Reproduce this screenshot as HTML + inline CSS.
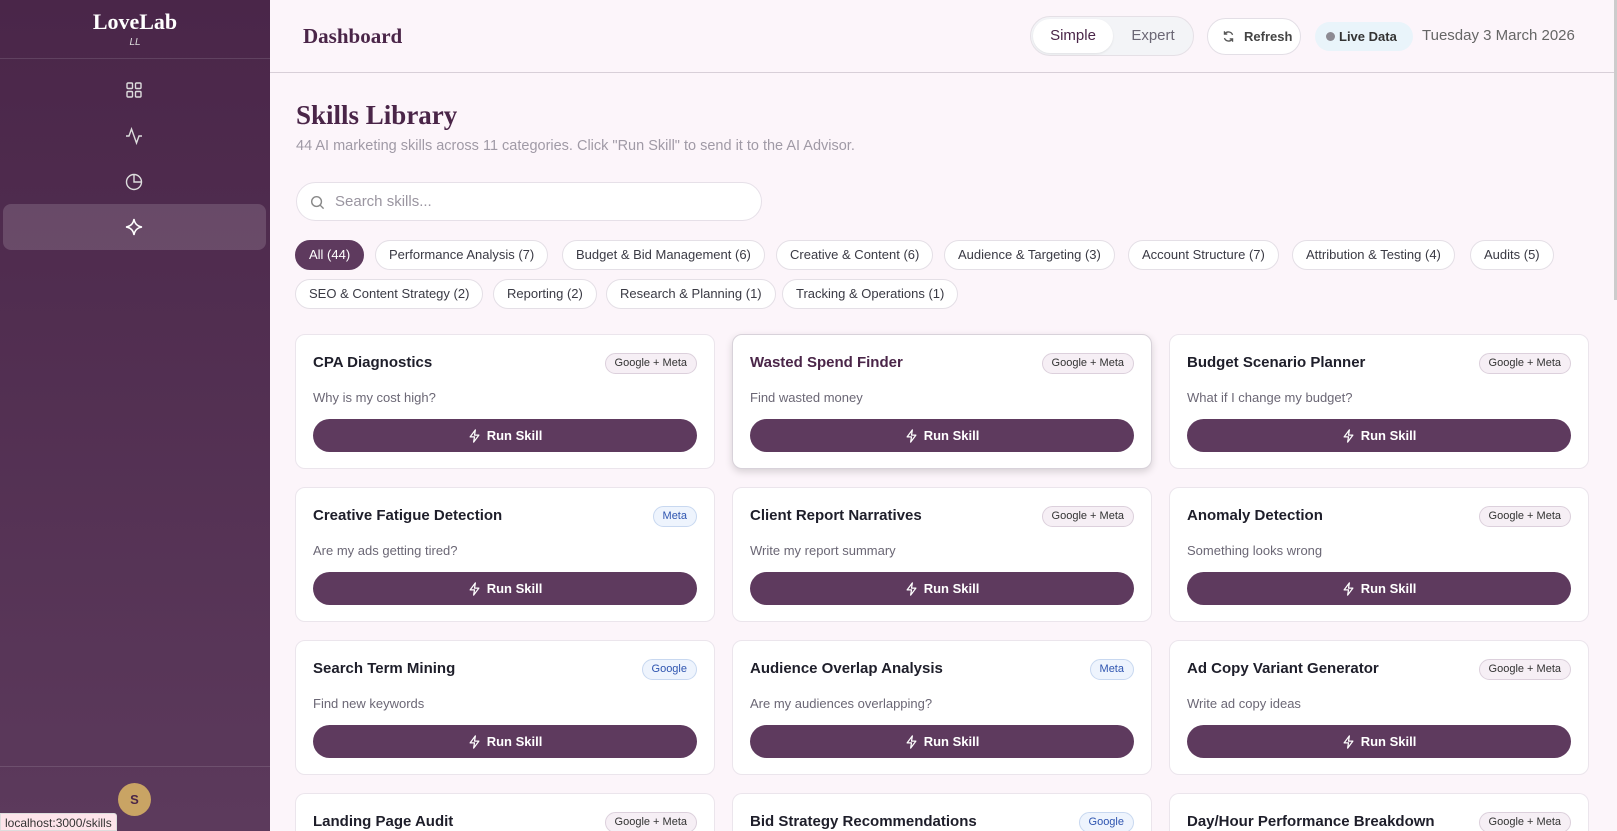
<!DOCTYPE html>
<html style="width:1617px;height:831px;overflow:hidden"><head><meta charset="utf-8"><style>
*{box-sizing:border-box;margin:0;padding:0}
body{width:1617px;height:831px;overflow:hidden;background:#fcf5fa;font-family:"Liberation Sans",sans-serif;position:relative}
.side{position:absolute;left:0;top:0;width:270px;height:831px;background:linear-gradient(#4a2649,#5c3a5c)}
.logo{position:absolute;top:9px;width:270px;text-align:center;color:#fff;font:bold 22px "Liberation Serif",serif}
.ll{position:absolute;top:37px;width:270px;text-align:center;color:#ddd;font:italic 10px "Liberation Sans",sans-serif}
.sline{position:absolute;left:0;width:270px;height:1px;background:rgba(255,255,255,.12)}
.ic{position:absolute;left:124px;width:20px;height:20px}
.act{position:absolute;left:3px;top:204px;width:263px;height:46px;border-radius:8px;background:rgba(255,255,255,.15)}
.av{position:absolute;left:118px;top:783px;width:33px;height:33px;border-radius:50%;background:#c9a464;color:#4a2648;font:bold 13px sans-serif;text-align:center;line-height:33px}
.url{position:absolute;left:0;top:813px;padding:2px 4px;background:#fde4ea;border:1px solid #ddd;border-radius:0 3px 0 0;font-size:12px;color:#333;height:18px}
.hdr{position:absolute;left:270px;top:0;right:0;height:73px;border-bottom:1px solid #d8cfd8}
.dash{position:absolute;left:303px;top:24px;font:bold 21px "Liberation Serif",serif;color:#4a2548}
.tog{position:absolute;left:1030px;top:16px;width:164px;height:40px;border-radius:20px;border:1px solid #e5e0e6;background:#f3f4f7}
.tog .s{position:absolute;left:2px;top:2px;width:80px;height:34px;border-radius:17px;background:#fff;box-shadow:0 1px 2px rgba(0,0,0,.08);text-align:center;line-height:34px;font-size:15px;color:#4a2548}
.tog .e{position:absolute;left:84px;top:2px;width:76px;text-align:center;line-height:34px;font-size:15px;color:#6b6775}
.ref{position:absolute;left:1207px;top:18px;width:94px;height:37px;border-radius:19px;border:1px solid #e3dfe6;background:#fff;font-size:13px;font-weight:bold;color:#444;line-height:35px;padding-left:36px}
.live{position:absolute;left:1315px;top:22px;width:98px;height:29px;border-radius:15px;background:#e9f4fa;font-size:13px;font-weight:bold;color:#333;line-height:29px;padding-left:24px}
.live:before{content:"";position:absolute;left:11px;top:10px;width:9px;height:9px;border-radius:50%;background:#8d8a92}
.date{position:absolute;left:1422px;top:27px;font-size:15px;color:#666;}
.scroll{position:absolute;left:1614px;top:0;width:3px;height:300px;background:#ccc}
h1{position:absolute;left:296px;top:100px;font:bold 27px "Liberation Serif",serif;color:#4a2548}
.sub{position:absolute;left:296px;top:138px;font-size:14.5px;color:#a09aa6}
.search{position:absolute;left:296px;top:182px;width:466px;height:39px;border-radius:20px;border:1px solid #e6e0e8;background:#fff;font-size:15px;color:#9a95a0;line-height:37px;padding-left:38px}
.chip{position:absolute;height:30px;border-radius:15px;border:1px solid #e4dfe6;background:#fff;font-size:13px;color:#3a3a44;line-height:28px;padding:0 13px;white-space:nowrap}
.chip.on{background:#5e3a5e;color:#fff;border-color:#5e3a5e}
.card{position:absolute;width:420px;height:135px;border-radius:10px;border:1px solid #ebe5ec;background:#fff}
.card.hv{box-shadow:0 3px 8px rgba(0,0,0,.15);border-color:#d8d2da}
.card .t{position:absolute;left:17px;top:19px;font-size:15px;font-weight:bold;color:#1e1e2a}
.card.hv .t{color:#4a2548}
.card .b{position:absolute;right:17px;top:18px;height:21px;border-radius:11px;border:1px solid #dcd0dc;background:#f6eff5;font-size:11px;color:#333;line-height:19px;padding:0 9px}
.card .b.bl{background:#eef4fd;border-color:#c8d8f0;color:#2f55b0}
.card .d{position:absolute;left:17px;top:55px;font-size:13px;color:#6b6775}
.card .r{position:absolute;left:17px;right:17px;top:84px;height:33px;border-radius:17px;background:#5e3a5e;color:#fff;font-size:13px;font-weight:bold;text-align:center;line-height:33px}
.r svg{vertical-align:-3px;margin-right:6px}
</style></head><body>
<div class="side">
<div class="logo">LoveLab</div><div class="ll">LL</div>
<div class="sline" style="top:58px"></div>
<svg class="ic" style="top:80px" viewBox="0 0 20 20" fill="none" stroke="#ddd" stroke-width="1.4"><rect x="3" y="3" width="5.5" height="5.5" rx="1"/><rect x="11.5" y="3" width="5.5" height="5.5" rx="1"/><rect x="3" y="11.5" width="5.5" height="5.5" rx="1"/><rect x="11.5" y="11.5" width="5.5" height="5.5" rx="1"/></svg>
<svg class="ic" style="top:126px" viewBox="0 0 20 20" fill="none" stroke="#ddd" stroke-width="1.4"><path d="M2 10h3l2.5-7 5 14 2.5-7h3"/></svg>
<svg class="ic" style="top:172px" viewBox="0 0 20 20" fill="none" stroke="#ddd" stroke-width="1.4"><circle cx="10" cy="10" r="7.5"/><path d="M10 2.5V10h7.5"/></svg>
<div class="act"></div>
<svg class="ic" style="top:217px" viewBox="0 0 20 20" fill="none" stroke="#fff" stroke-width="1.5"><path d="M10 2Q11 9 18 10Q11 11 10 18Q9 11 2 10Q9 9 10 2Z"/></svg>
<div class="sline" style="top:766px"></div>
<div class="av">S</div>
</div>
<div class="hdr"></div>
<div class="dash">Dashboard</div>
<div class="tog"><div class="s">Simple</div><div class="e">Expert</div></div>
<div class="ref"><svg style="position:absolute;left:14px;top:11px" width="13" height="13" viewBox="0 0 16 16" fill="none" stroke="#555" stroke-width="1.6"><path d="M13 6A5.5 5.5 0 0 0 3.5 4.5M3 10a5.5 5.5 0 0 0 9.5 1.5M3 1.5v3.5h3.5M13 14.5V11H9.5"/></svg>Refresh</div>
<div class="live">Live Data</div>
<div class="date">Tuesday 3 March 2026</div>
<div class="scroll"></div>
<h1>Skills Library</h1>
<div class="sub">44 AI marketing skills across 11 categories. Click "Run Skill" to send it to the AI Advisor.</div>
<div class="search"><svg style="position:absolute;left:13px;top:12px" width="15" height="15" viewBox="0 0 16 16" fill="none" stroke="#888" stroke-width="1.5"><circle cx="7" cy="7" r="5.2"/><path d="M11 11l3.5 3.5"/></svg>Search skills...</div>
<div class="chip on" style="left:295px;top:240px">All (44)</div>
<div class="chip" style="left:375px;top:240px">Performance Analysis (7)</div>
<div class="chip" style="left:562px;top:240px">Budget &amp; Bid Management (6)</div>
<div class="chip" style="left:776px;top:240px">Creative &amp; Content (6)</div>
<div class="chip" style="left:944px;top:240px">Audience &amp; Targeting (3)</div>
<div class="chip" style="left:1128px;top:240px">Account Structure (7)</div>
<div class="chip" style="left:1292px;top:240px">Attribution &amp; Testing (4)</div>
<div class="chip" style="left:1470px;top:240px">Audits (5)</div>
<div class="chip" style="left:295px;top:279px">SEO &amp; Content Strategy (2)</div>
<div class="chip" style="left:493px;top:279px">Reporting (2)</div>
<div class="chip" style="left:606px;top:279px">Research &amp; Planning (1)</div>
<div class="chip" style="left:782px;top:279px">Tracking &amp; Operations (1)</div>

<div class="card" style="left:295px;top:334px"><div class="t">CPA Diagnostics</div><div class="b">Google + Meta</div><div class="d">Why is my cost high?</div><div class="r"><svg width="13" height="14" viewBox="0 0 14 16" fill="none" stroke="#fff" stroke-width="1.4" stroke-linejoin="round"><path d="M8 1L2 9h5l-1 6 6-8H7z"/></svg>Run Skill</div></div>
<div class="card hv" style="left:732px;top:334px"><div class="t">Wasted Spend Finder</div><div class="b">Google + Meta</div><div class="d">Find wasted money</div><div class="r"><svg width="13" height="14" viewBox="0 0 14 16" fill="none" stroke="#fff" stroke-width="1.4" stroke-linejoin="round"><path d="M8 1L2 9h5l-1 6 6-8H7z"/></svg>Run Skill</div></div>
<div class="card" style="left:1169px;top:334px"><div class="t">Budget Scenario Planner</div><div class="b">Google + Meta</div><div class="d">What if I change my budget?</div><div class="r"><svg width="13" height="14" viewBox="0 0 14 16" fill="none" stroke="#fff" stroke-width="1.4" stroke-linejoin="round"><path d="M8 1L2 9h5l-1 6 6-8H7z"/></svg>Run Skill</div></div>

<div class="card" style="left:295px;top:487px"><div class="t">Creative Fatigue Detection</div><div class="b bl">Meta</div><div class="d">Are my ads getting tired?</div><div class="r"><svg width="13" height="14" viewBox="0 0 14 16" fill="none" stroke="#fff" stroke-width="1.4" stroke-linejoin="round"><path d="M8 1L2 9h5l-1 6 6-8H7z"/></svg>Run Skill</div></div>
<div class="card" style="left:732px;top:487px"><div class="t">Client Report Narratives</div><div class="b">Google + Meta</div><div class="d">Write my report summary</div><div class="r"><svg width="13" height="14" viewBox="0 0 14 16" fill="none" stroke="#fff" stroke-width="1.4" stroke-linejoin="round"><path d="M8 1L2 9h5l-1 6 6-8H7z"/></svg>Run Skill</div></div>
<div class="card" style="left:1169px;top:487px"><div class="t">Anomaly Detection</div><div class="b">Google + Meta</div><div class="d">Something looks wrong</div><div class="r"><svg width="13" height="14" viewBox="0 0 14 16" fill="none" stroke="#fff" stroke-width="1.4" stroke-linejoin="round"><path d="M8 1L2 9h5l-1 6 6-8H7z"/></svg>Run Skill</div></div>

<div class="card" style="left:295px;top:640px"><div class="t">Search Term Mining</div><div class="b bl">Google</div><div class="d">Find new keywords</div><div class="r"><svg width="13" height="14" viewBox="0 0 14 16" fill="none" stroke="#fff" stroke-width="1.4" stroke-linejoin="round"><path d="M8 1L2 9h5l-1 6 6-8H7z"/></svg>Run Skill</div></div>
<div class="card" style="left:732px;top:640px"><div class="t">Audience Overlap Analysis</div><div class="b bl">Meta</div><div class="d">Are my audiences overlapping?</div><div class="r"><svg width="13" height="14" viewBox="0 0 14 16" fill="none" stroke="#fff" stroke-width="1.4" stroke-linejoin="round"><path d="M8 1L2 9h5l-1 6 6-8H7z"/></svg>Run Skill</div></div>
<div class="card" style="left:1169px;top:640px"><div class="t">Ad Copy Variant Generator</div><div class="b">Google + Meta</div><div class="d">Write ad copy ideas</div><div class="r"><svg width="13" height="14" viewBox="0 0 14 16" fill="none" stroke="#fff" stroke-width="1.4" stroke-linejoin="round"><path d="M8 1L2 9h5l-1 6 6-8H7z"/></svg>Run Skill</div></div>

<div class="card" style="left:295px;top:793px;height:38px;border-bottom:none;border-radius:10px 10px 0 0"><div class="t">Landing Page Audit</div><div class="b">Google + Meta</div></div>
<div class="card" style="left:732px;top:793px;height:38px;border-bottom:none;border-radius:10px 10px 0 0"><div class="t">Bid Strategy Recommendations</div><div class="b bl">Google</div></div>
<div class="card" style="left:1169px;top:793px;height:38px;border-bottom:none;border-radius:10px 10px 0 0"><div class="t">Day/Hour Performance Breakdown</div><div class="b">Google + Meta</div></div>
<div class="url">localhost:3000/skills</div>
</body></html>
